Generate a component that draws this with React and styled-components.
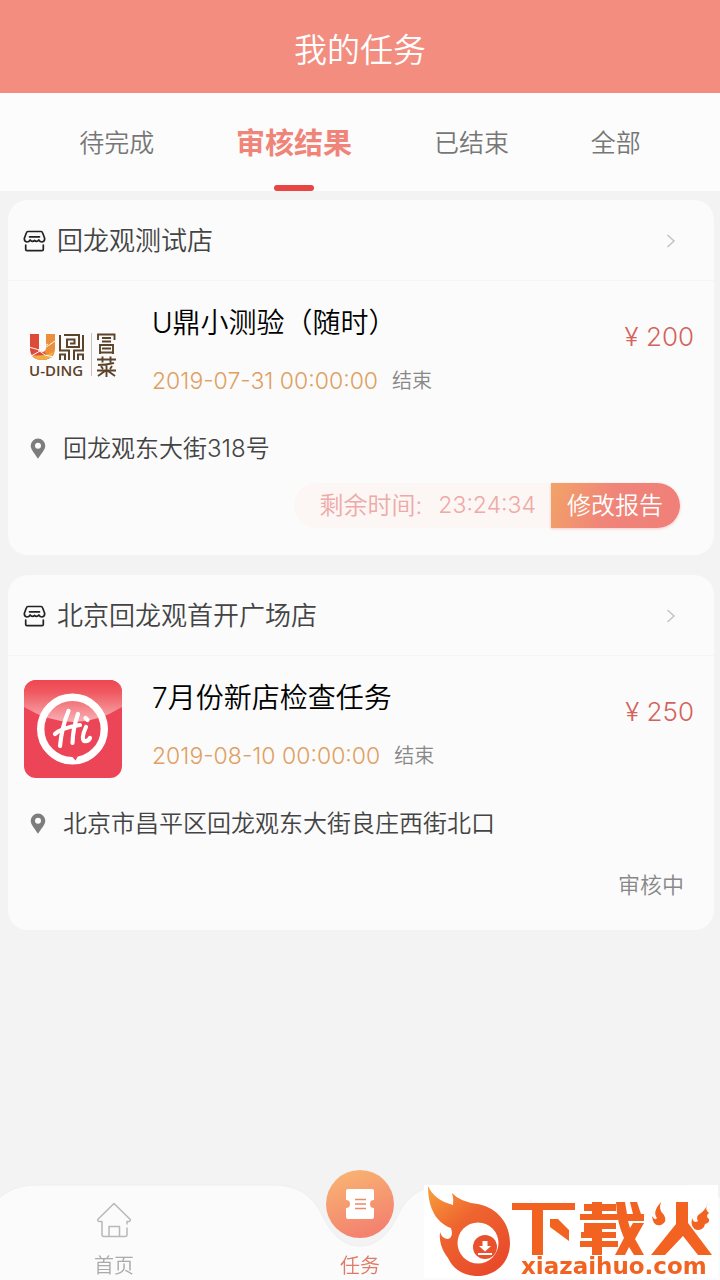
import React from 'react'
import styled, { createGlobalStyle } from 'styled-components'

const GlobalStyle = createGlobalStyle`
  * { box-sizing: border-box; }
  body { margin: 0; background: #f3f3f4; }
  button { border: 0; padding: 0; margin: 0; background: none; font: inherit; color: inherit; cursor: pointer; }
  a { color: inherit; text-decoration: none; }
  h1, h2, h3, p { margin: 0; font-weight: inherit; }
`

const tabs = ['待完成', '审核结果', '已结束', '全部']

const tasks = [
  {
    id: 1,
    shop: '回龙观测试店',
    title: 'U鼎小测验（随时）',
    date: '2019-07-31 00:00:00',
    price: '200',
    address: '回龙观东大街318号',
    remaining: '23:24:34',
    Logo: UdingLogo,
  },
  {
    id: 2,
    shop: '北京回龙观首开广场店',
    title: '7月份新店检查任务',
    date: '2019-08-10 00:00:00',
    price: '250',
    address: '北京市昌平区回龙观东大街良庄西街北口',
    status: '审核中',
    Logo: HiLogo,
  },
]

export default function App() {
  return (
    <Page>
      <GlobalStyle />
      <Header><h1>我的任务</h1></Header>
      <Tabs>
        {tabs.map((t, i) => <Tab key={t} $active={i === 1}>{t}</Tab>)}
      </Tabs>
      <List>
        {tasks.map(task => <TaskCard key={task.id} task={task} />)}
      </List>
      <BottomNav />
    </Page>
  )
}

function TaskCard({ task }) {
  const { Logo } = task
  return (
    <Card>
      <ShopLink href="#shop">
        <ShopIcon />
        <ShopName>{task.shop}</ShopName>
        <Chevron />
      </ShopLink>
      <Summary>
        <Logo />
        <Info>
          <TaskTitle>{task.title}</TaskTitle>
          <Deadline>
            <time>{task.date}</time>
            <span>结束</span>
          </Deadline>
        </Info>
        <Price>¥ {task.price}</Price>
      </Summary>
      <Address>
        <PinIcon />
        <p>{task.address}</p>
      </Address>
      <CardFoot>
        {task.remaining && (
          <>
            <Remaining>剩余时间:<time>{task.remaining}</time></Remaining>
            <EditButton>修改报告</EditButton>
          </>
        )}
        {task.status && <Status>{task.status}</Status>}
      </CardFoot>
    </Card>
  )
}

function BottomNav() {
  return (
    <Nav>
      <NavShape viewBox="0 0 720 96" preserveAspectRatio="none" aria-hidden="true">
        <path d="M-2 15C8 6 20 1 36 1H274C298 1 312 12 321 29C331 50 343 62 360 62C377 62 389 50 399 29C408 12 422 1 446 1H684C700 1 712 6 722 15V98H-2Z" fill="#fbfbfb" stroke="#eee" />
      </NavShape>
      <NavItem href="#home">
        <HomeIcon />
        首页
      </NavItem>
      <NavItem href="#tasks" $active>
        <TaskBubble><TicketIcon /></TaskBubble>
        任务
      </NavItem>
      <Watermark>
        <FlameLogo />
      </Watermark>
    </Nav>
  )
}

function ShopIcon() {
  return (
    <svg width="23" height="22" viewBox="0 0 23 22" fill="none" stroke="#222" strokeWidth="1.7" strokeLinecap="round" strokeLinejoin="round">
      <path d="M5 1.500H18Q19.200 1.500 19.700 3L21.700 8.500Q21.700 11.500 19.200 12Q16.800 12 15.800 10Q13.800 12.500 11.500 10.500Q9.200 12.500 7.200 10Q6.200 12 3.800 12Q1.300 11.500 1.300 8.500L3.300 3Q3.800 1.500 5 1.500Z" />
      <path d="M6.500 6.800H16.500M2.700 15V19.500Q2.700 20.700 4 20.700H19Q20.300 20.700 20.300 19.500V15" />
    </svg>
  )
}

function Chevron() {
  return (
    <svg width="10" height="14" viewBox="0 0 10 14" fill="none" stroke="#c4c4c4" strokeWidth="1.5">
      <path d="M1.500 1L8 7L1.500 13" />
    </svg>
  )
}

function PinIcon() {
  return (
    <svg width="16" height="22" viewBox="0 0 16 22">
      <path fillRule="evenodd" fill="#7d7d7d" d="M8 .5A7.300 7.300 0 0 1 15.300 7.800C15.300 12 10.500 16.500 8 20.800C5.500 16.500.7 12 .7 7.800A7.300 7.300 0 0 1 8 .5ZM8 4.800A3 3 0 1 0 8 10.800A3 3 0 1 0 8 4.800Z" />
    </svg>
  )
}

function HomeIcon() {
  return (
    <svg width="36" height="36" viewBox="0 0 36 36" fill="none" stroke="#b8b8b8" strokeWidth="1.500" strokeLinejoin="round" strokeLinecap="round">
      <path d="M31 26V32.500Q31 34.500 29 34.500H8Q6 34.500 6 32.500V19.500H3Q.8 19 2.200 17L18 1.500L33.800 17Q35.200 19 33 19.500H31V22" />
      <path d="M13 34V24.500H23.500V34" />
    </svg>
  )
}

function TicketIcon() {
  return (
    <svg width="30" height="32" viewBox="0 0 30 32">
      <path fill="#fff" d="M3 1H27Q29 1 29 3V12A4 4 0 0 0 29 20V29Q29 31 27 31H3Q1 31 1 29V20A4 4 0 0 0 1 12V3Q1 1 3 1Z" />
      <path d="M10 11.500H21M10 16H21M10 20.500H21" stroke="#e98a6a" strokeWidth="1.600" />
    </svg>
  )
}

function UdingLogo() {
  return (
    <svg width="98" height="98" viewBox="0 0 98 98" role="img" aria-label="U鼎冒菜">
      <path fill="#dd4a38" d="M6 29H15V43Q15 47 18.500 47Q20.500 47 21.500 45L26 53Q23 55 18.500 55Q6 55 6 43Z" />
      <path fill="#ec8f3a" d="M22 29H31V43Q31 50 27 53L20 47Q22 46 22 43Z" />
      <path fill="#efb03f" d="M8 50Q18 52 30 47Q27 55 18.500 55Q11 55 8 50Z" />
      <path d="M5 42Q14 43 21 50L29 52M7 51Q17 46 31 36M14 45L24 39" stroke="#fbfbfb" strokeWidth="1" fill="none" />
      <g fill="none" stroke="#5c432b" strokeWidth="2">
        <path d="M40 30H55V42H43V34.500H50.500V38.500H46M36 30V45.500H45V55M59 30V45.500H50V55M36 55V49.500H41V55M59 55V49.500H54V55" />
      </g>
      <path d="M67.500 28V71" stroke="#c9c1b8" />
      <g fill="none" stroke="#5c432b" strokeWidth="1.900">
        <path d="M74 35V29.500H90.500V35M78 33H87M78 36.500H87M76 49V40H89V49M78 43.500H87M76 47.500H89" />
        <path d="M73 54.500H92M78.500 51.500V57.500M86.500 51.500V57.500M74 60Q82 60 90 58M77 61L79 64M82.500 60.500V72M88 61L86 64M73 65.500H92M81 66L74 71M84 66L91 71" />
      </g>
      <text x="5" y="71" fontFamily="'Open Sans', sans-serif" fontWeight="600" fontSize="15" fill="#5c432b">U-DING</text>
    </svg>
  )
}

function HiLogo() {
  return (
    <svg width="98" height="98" viewBox="0 0 98 98" role="img" aria-label="Hi">
      <defs>
        <clipPath id="hiClip"><rect width="98" height="98" rx="12" /></clipPath>
        <linearGradient id="hiShine" x1="0" y1="0" x2="0" y2="1">
          <stop offset="0" stopColor="#ef4650" />
          <stop offset=".3" stopColor="#f05a62" />
          <stop offset="1" stopColor="#f8b0b4" />
        </linearGradient>
      </defs>
      <g clipPath="url(#hiClip)">
        <rect width="98" height="98" fill="#ec4558" />
        <path d="M0 0H98V27Q50 57 0 27Z" fill="url(#hiShine)" />
      </g>
      <circle cx="48.500" cy="49" r="31.800" fill="none" stroke="#fff" strokeWidth="7.400" />
      <path d="M48 76.500L54 76L51.500 80.500Z" fill="#ec4558" />
      <g fill="none" stroke="#fff" strokeWidth="4.200" strokeLinecap="round" strokeLinejoin="round">
        <path d="M44.500 31Q38 46 36 66M31 54Q37 48 56 45M54 34Q49 48 48.500 63M62 47Q57 58 60 61Q64 62 66 58" />
        <path d="M61.500 38L63.500 40" />
      </g>
    </svg>
  )
}

function FlameLogo() {
  return (
    <svg width="100%" height="100%" viewBox="0 0 294 93" role="img" aria-label="下载火 xiazaihuo.com">
      <defs>
        <linearGradient id="flame" x1="0" y1="0" x2=".7" y2="1">
          <stop offset="0" stopColor="#f9a13a" />
          <stop offset=".45" stopColor="#ee6530" />
          <stop offset="1" stopColor="#e94a2a" />
        </linearGradient>
      </defs>
      <path fill="url(#flame)" d="M4 1Q10 15 29 20Q30 14 28 8Q36 17 54 19C74 23 86 39 86 58C86 78 71 92 51 91C37 90 28 82 24 73C18 65 15 57 16 47Q18 54 24 54Q30 52 27 43C16 39 4 28 4 1Z" />
      <circle cx="54" cy="58" r="20.500" fill="#fff" />
      <circle cx="61" cy="62" r="12" fill="#e9512c" />
      <path fill="#fff" d="M58.500 56H63.500V61H67L61 66.500L55 61H58.500ZM54 68H68V70H54Z" />
      <g fill="#f26322">
        <path d="M88 18H151V25H119V70H108V25H88ZM126 34H134L145 45V56L126 42Z" />
        <path d="M160 19H168V17H178V19H192V26H178V29H194V35H156V29H168V26H160ZM160 38H192V44H178V47H192V53H178V56H194V62H178V70H168V62H156V56H168V53H157V47H160Z" />
        <path d="M192 17H201L203 29H209L206 17H213L217 29H220V36H204L206 43L209 38H220L211 54L220 70H210L205 62L201 70H191L200 53Q193 38 192 17Z" />
        <path d="M252 17H264V38L288 70H274L259 51L241 70H227L252 39Z" />
        <path d="M237 17Q234 25 240 30Q244 37 237 40Q229 42 228 31Q231 36 233 33Q228 27 237 17Z" />
        <path d="M284 18Q280 24 285 28Q281 31 285 34Q286 38 281 39Q280 45 273 45Q266 43 268 33Q270 39 274 36Q271 31 277 28Q282 24 284 18Z" />
      </g>
      <text x="97" y="89" fontFamily="'DejaVu Sans', sans-serif" fontSize="23" fontWeight="bold" fill="#f26322">xiazaihuo.com</text>
    </svg>
  )
}

const Page = styled.div`
  min-height: 100vh;
  display: flex;
  flex-direction: column;
  background: #f3f3f4;
  color: #444;
  font-family: Inter, "Noto Sans CJK SC", sans-serif;
  font-weight: 350;
`

const Header = styled.header`
  height: 93px;
  display: flex;
  align-items: center;
  justify-content: center;
  padding-top: 6px;
  background: #f38d7f;
  color: #fff;
  h1 {
    font-size: 33px;
    line-height: 48px;
  }
`

const Tabs = styled.nav`
  height: 98px;
  display: flex;
  justify-content: space-between;
  padding: 0 11%;
  background: #fcfcfc;
`

const Tab = styled.button`
  position: relative;
  height: 98px;
  padding-bottom: 2px;
  font-size: ${p => (p.$active ? 29 : 25)}px;
  font-weight: ${p => (p.$active ? 700 : 350)};
  color: ${p => (p.$active ? '#f08478' : '#777')};
  &::after {
    content: '';
    display: ${p => (p.$active ? 'block' : 'none')};
    position: absolute;
    left: calc(50% - 20px);
    bottom: 0;
    width: 40px;
    height: 6px;
    border-radius: 3px;
    background: #e84545;
  }
`

const List = styled.main`
  flex: 1;
  display: flex;
  flex-direction: column;
  gap: 20px;
  padding: 9px 6px 40px 8px;
`

const Card = styled.article`
  border-radius: 20px;
  background: #fbfbfb;
  padding-bottom: 27px;
`

const ShopLink = styled.a`
  height: 81px;
  display: flex;
  align-items: center;
  gap: 11px;
  padding: 2px 38px 0 15px;
  border-bottom: 1px solid #f5f5f5;
`

const ShopName = styled.h2`
  flex: 1;
  font-size: 26px;
  line-height: 36px;
`

const Summary = styled.div`
  display: flex;
  align-items: flex-start;
  padding: 24px 20px 0 16px;
`

const Info = styled.div`
  flex: 1;
  padding-left: 30px;
`

const TaskTitle = styled.h3`
  font-size: 28px;
  line-height: 36px;
  color: #000;
`

const Deadline = styled.p`
  display: flex;
  align-items: center;
  gap: 14px;
  margin-top: 24px;
  font-size: 20px;
  line-height: 32px;
  color: #888;
  time {
    font-size: 23px;
    font-weight: 300;
    color: #dfa062;
  }
`

const Price = styled.p`
  margin-top: 14px;
  font-size: 26px;
  line-height: 36px;
  font-weight: 300;
  color: #d4635c;
`

const Address = styled.div`
  display: flex;
  align-items: center;
  gap: 17px;
  margin-top: 28px;
  padding-left: 22px;
  font-size: 24px;
  line-height: 36px;
`

const CardFoot = styled.div`
  min-height: 45px;
  display: flex;
  justify-content: flex-end;
  margin-top: 16px;
  padding: 0 34px 0 20px;
  line-height: 45px;
`

const Remaining = styled.p`
  display: flex;
  gap: 16px;
  padding: 0 15px 0 26px;
  border-radius: 23px 0 0 23px;
  background: #fcf6f5;
  font-size: 24px;
  color: #eeaaa6;
  time {
    font-size: 23px;
  }
`

const EditButton = styled.button`
  padding: 0 17px 0 16px;
  border-radius: 0 23px 23px 0;
  background: linear-gradient(110deg, #f2a366, #f0857a 45%, #f07f78);
  box-shadow: 0 1px 3px #f0857a66;
  font-size: 24px;
  line-height: 45px;
  color: #fff;
`

const Status = styled.p`
  align-self: flex-end;
  margin-right: -4px;
  font-size: 22px;
  line-height: 36px;
  color: #888;
`

const Nav = styled.nav`
  position: sticky;
  bottom: 0;
  display: grid;
  grid-template-columns: 19fr 22fr 19fr;
  grid-auto-rows: 96px;
`

const NavShape = styled.svg`
  position: absolute;
  inset: 0;
  width: 100%;
  height: 100%;
`

const NavItem = styled.a`
  position: relative;
  display: flex;
  flex-direction: column;
  align-items: center;
  justify-content: flex-end;
  gap: 14px;
  font-size: 20px;
  line-height: 28px;
  color: ${p => (p.$active ? '#e07a68' : '#aaa')};
`

const TaskBubble = styled.span`
  flex: none;
  width: 68px;
  height: 68px;
  display: flex;
  align-items: center;
  justify-content: center;
  border-radius: 50%;
  background: linear-gradient(160deg, #f9b872, #f3826f 85%);
`

const Watermark = styled.div`
  position: absolute;
  right: 2px;
  bottom: 2px;
  width: 294px;
  height: 93px;
  background: #fff;
`
